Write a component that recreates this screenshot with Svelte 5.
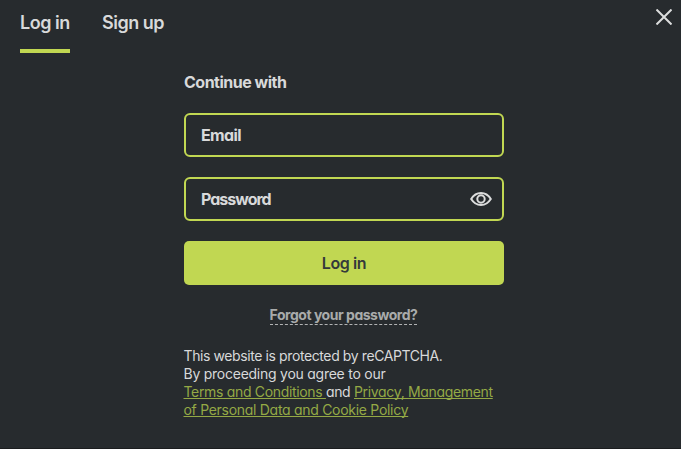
<script>
  let email = $state('');
  let password = $state('');
  let visible = $state(false);
</script>

<div class="dialog">
  <header>
    <nav>
      <button class="tab active">Log in</button>
      <button class="tab signup">Sign up</button>
    </nav>
    <button class="close" aria-label="Close">
      <svg width="16" height="16" viewBox="0 0 16 16"><path d="M.5.5 15.5 15.5M15.5.5.5 15.5" /></svg>
    </button>
  </header>

  <main>
    <h1>Continue with</h1>
    <label class="field">
      <input class="email" type="email" placeholder="Email" bind:value={email} />
    </label>
    <div class="field">
      <input class="password" type={visible ? 'text' : 'password'} placeholder="Password" bind:value={password} />
      <button class="eye" aria-label="Show password" onclick={() => (visible = !visible)}>
        <svg width="22" height="14" viewBox="0 0 22 14">
          <path d="M1.200 7C3.600 3.100 6.800 1 11 1s7.400 2.100 9.800 6c-2.400 3.900-5.600 6-9.800 6S3.600 10.900 1.200 7Z" />
          <circle cx="11" cy="7" r="3.700" />
        </svg>
      </button>
    </div>
    <button class="submit">Log in</button>
    <div class="forgot"><a href="#forgot">Forgot your password?</a></div>
    <p>
      <span class="l1">This website is protected by reCAPTCHA.</span><br />
      <span class="l2">By proceeding you agree to our</span><br />
      <span class="l3"><a href="#terms">Terms and Conditions{' '}</a>and <a href="#privacy">Privacy, Management</a></span><br />
      <span class="l4"><a href="#privacy">of Personal Data and Cookie Policy</a></span>
    </p>
  </main>
</div>

<style>
  :global(body) { background: #272b2e; }
  .dialog {
    box-sizing: border-box;
    height: 449px;
    background: #272b2e;
    border-bottom: 1px solid #1b1d1f;
    color: #d8d9da;
    font-family: Inter, "Liberation Sans", sans-serif;
    font-feature-settings: "cv11" 1;
    overflow: hidden;
  }
  button, input {
    margin: 0;
    padding: 0;
    border: 0;
    background: none;
    color: inherit;
    font: inherit;
    font-feature-settings: inherit;
  }
  header { display: flex; justify-content: space-between; align-items: flex-start; height: 53px; padding: 0 9px 0 20px; }
  nav { display: flex; gap: 32px; }
  .tab { box-sizing: border-box; height: 53px; padding-bottom: 4px; border-bottom: 4px solid transparent; font-size: 18px; font-weight: 600; line-height: 45px; text-align: left; white-space: nowrap; }
  .active { width: 50px; border-color: #c1d752; letter-spacing: -0.5px; }
  .signup { width: 63px; letter-spacing: -0.5px; }
  .close { margin-top: 9px; height: 16px; line-height: 0; }
  svg { display: block; fill: none; stroke: #dcdddd; }
  .close svg { stroke-width: 2; }
  main { width: 320px; margin-left: 184px; }
  h1 { margin: 0; padding-top: 19px; height: 60px; font-size: 16px; line-height: 20px; font-weight: 700; letter-spacing: -0.5px; }
  .field { box-sizing: border-box; display: flex; align-items: center; height: 44px; margin-bottom: 20px; padding: 0 10px 0 15px; border: 2px solid #c1d752; border-radius: 6px; }
  input { flex: 1; min-width: 0; height: 40px; outline: 0; font-size: 16px; font-weight: 700; }
  input::placeholder { color: #d8d9da; opacity: 1; }
  .email { letter-spacing: -0.6px; }
  .password { letter-spacing: -1px; }
  .eye svg { stroke-width: 2; }
  .submit { display: block; width: 320px; height: 44px; border-radius: 5px; background: #c1d752; color: #34393b; font-size: 16px; font-weight: 600; letter-spacing: -0.4px; }
  .forgot { display: flex; justify-content: center; height: 55px; padding-top: 22px; }
  .forgot a { height: 17px; margin-right: 1px; border-bottom: 1px dashed #b2b3b4; color: #a9abab; font-size: 14px; line-height: 16px; font-weight: 700; letter-spacing: -0.47px; text-decoration: none; white-space: nowrap; }
  h1, p, .forgot { box-sizing: border-box; }
  p { margin: 7px 0 0 -0.5px; font-size: 14px; line-height: 18px; white-space: nowrap; }
  p a { color: #94a945; text-decoration: underline; text-decoration-thickness: 1px; text-underline-offset: 1px; text-decoration-skip-ink: none; }
  .l1 { letter-spacing: -0.4px; }
  .l2 { letter-spacing: -0.25px; }
  .l3 { letter-spacing: -0.33px; }
  .l4 { letter-spacing: -0.29px; }
</style>
